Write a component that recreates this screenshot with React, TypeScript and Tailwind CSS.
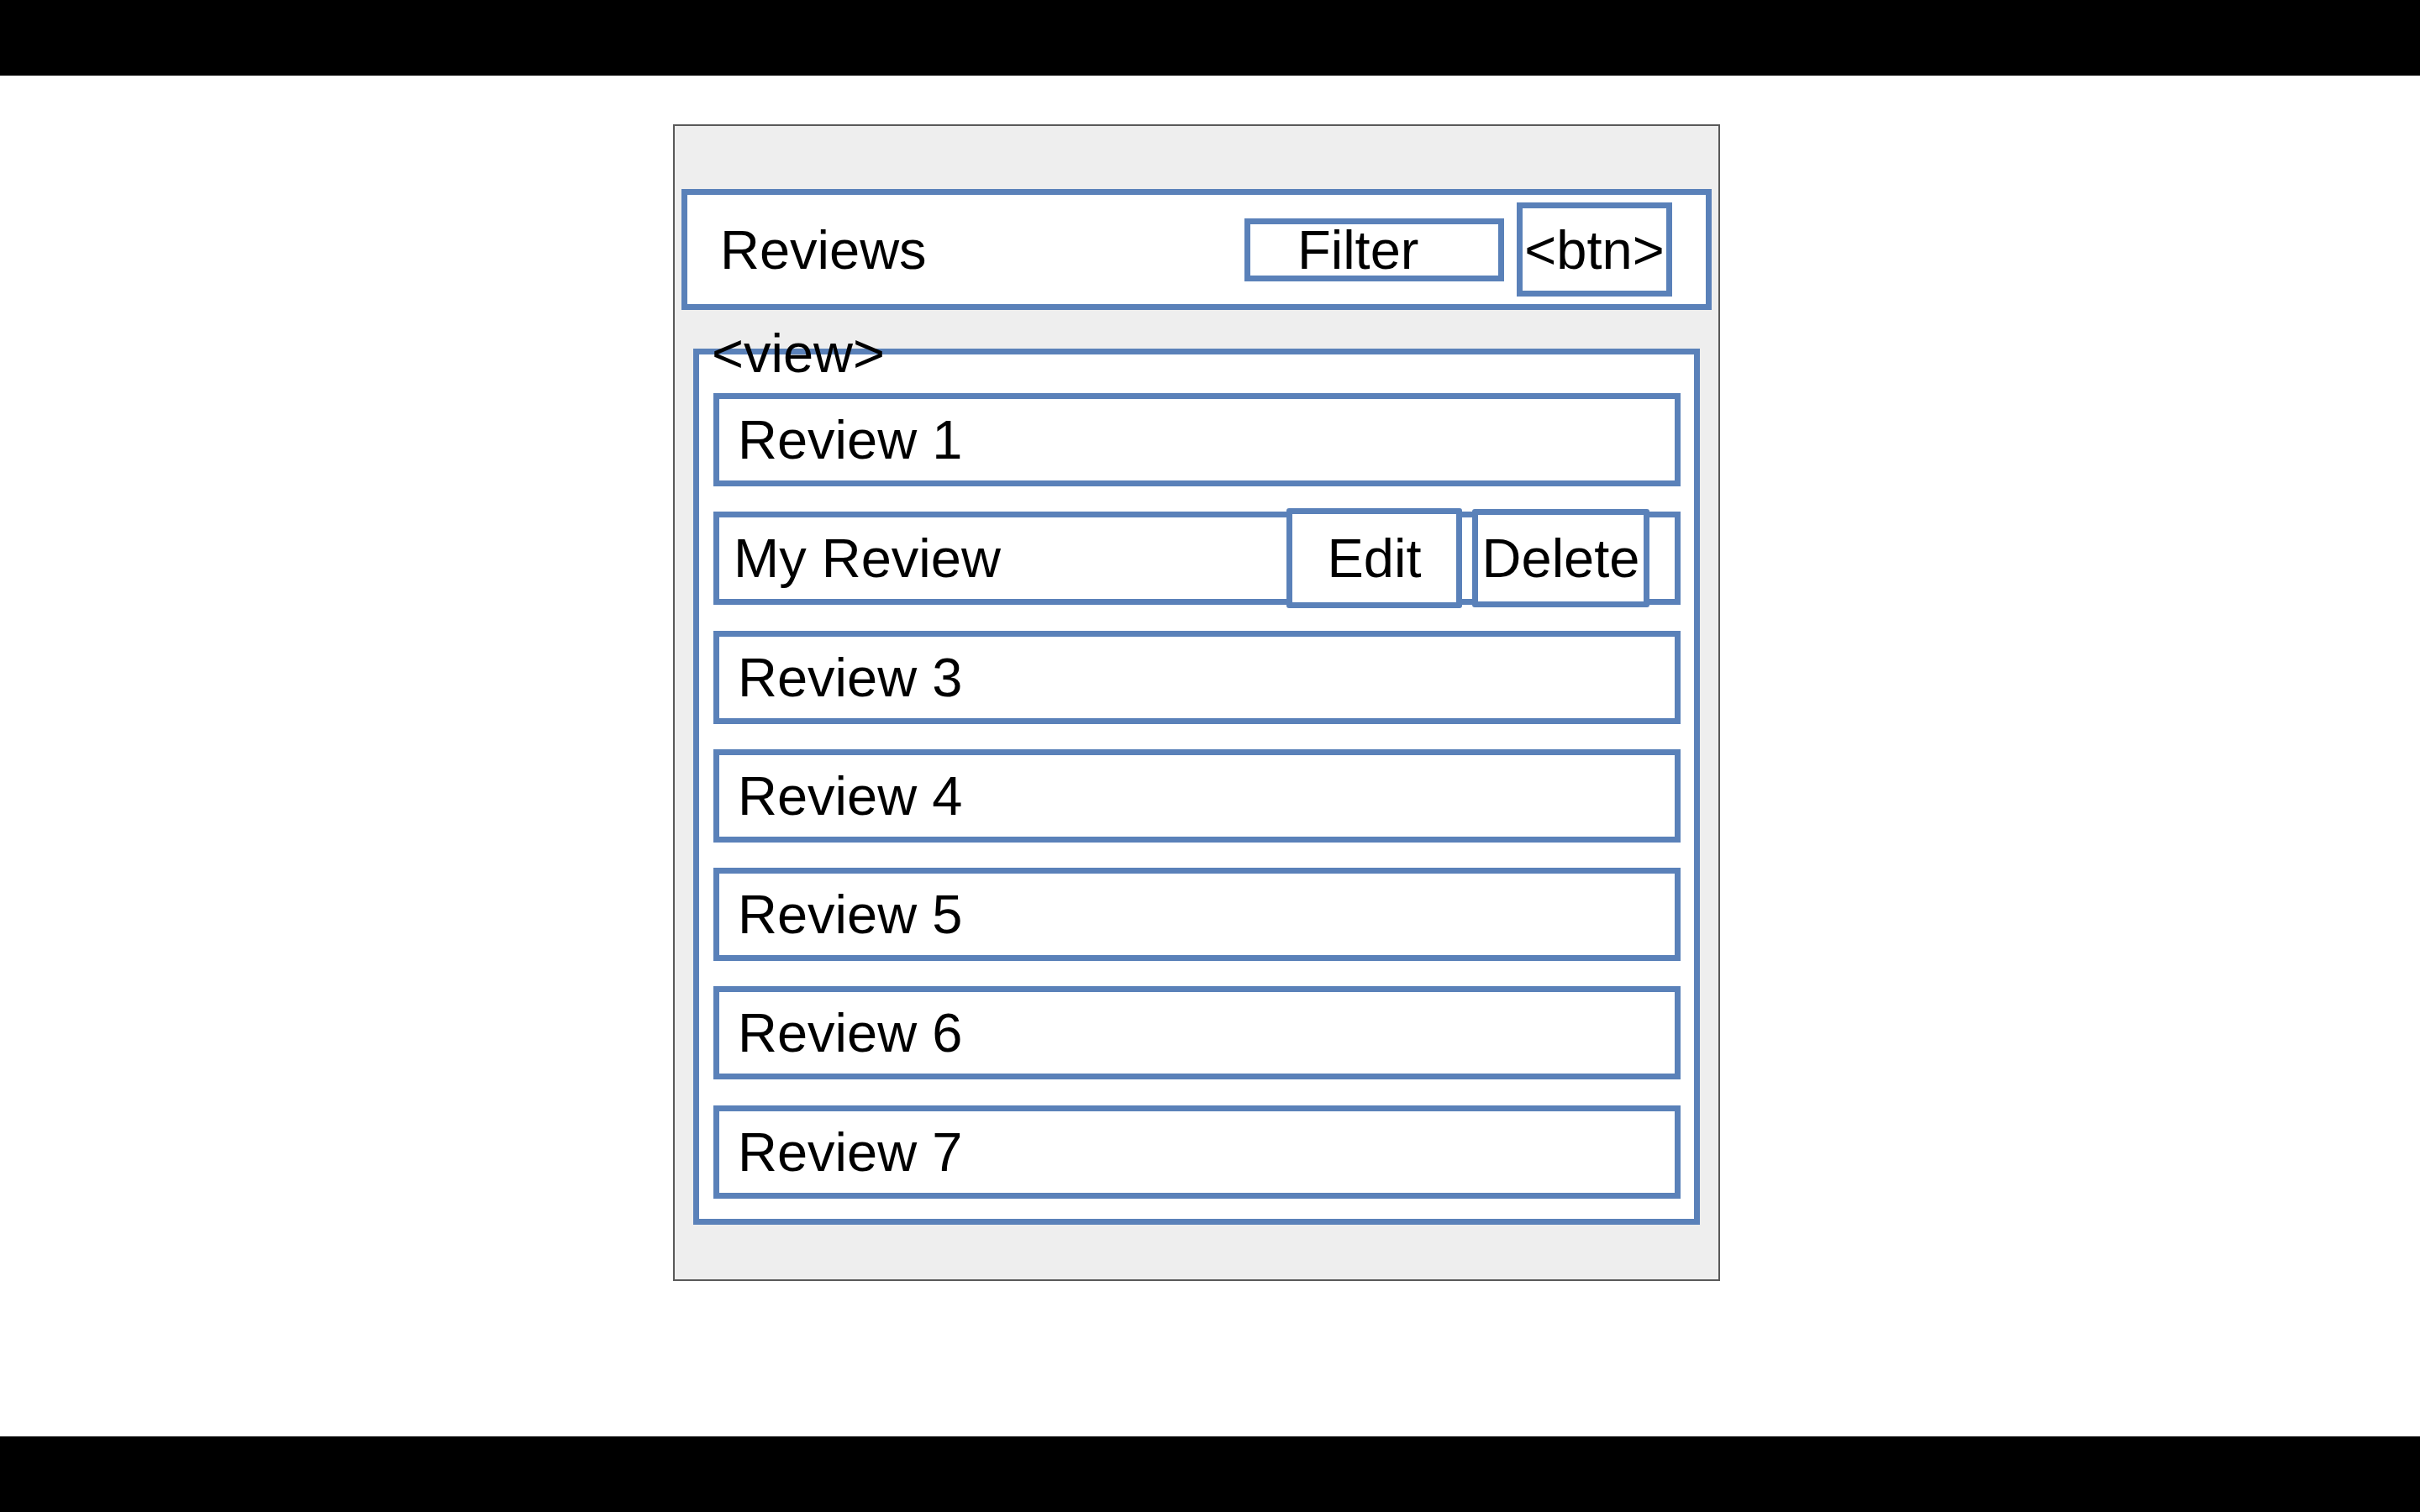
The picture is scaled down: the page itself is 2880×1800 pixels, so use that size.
import React from 'react';

const reviews = ['Review 1', 'My Review', 'Review 3', 'Review 4', 'Review 5', 'Review 6', 'Review 7'];

function ReviewRow({ label }: { label: string }) {
  if (label === 'My Review') {
    return (
      <div className="flex h-[111px] w-[1151px] items-center border-[7px] border-[#5a81b9] bg-white pl-[17px] pr-[30px]">
        <span className="flex-1 text-[65px] leading-none">{label}</span>
        <button className="flex h-[119px] w-[209px] items-center justify-center rounded-[3px] border-[7px] border-[#5a81b9] bg-white text-[65px] leading-none">
          Edit
        </button>
        <button className="ml-[12px] flex h-[117px] w-[211px] items-center justify-center rounded-[3px] border-[7px] border-[#5a81b9] bg-white text-[65px] leading-none">
          Delete
        </button>
      </div>
    );
  }
  return (
    <div className="flex h-[111px] w-[1151px] items-center border-[7px] border-[#5a81b9] bg-white pl-[22px]">
      <span className="text-[65px] leading-none">{label}</span>
    </div>
  );
}

export default function App() {
  return (
    <div className="flex h-screen flex-col bg-white text-black [font-family:'Liberation_Sans',Arial,sans-serif]">
      <div className="h-[90px] bg-black" />

      <div className="flex-1">
        <div className="ml-[801px] mt-[58px] flex h-[1377px] w-[1246px] flex-col border-2 border-[#595959] bg-[#eeeeee] px-[8px] pt-[75px]">
          {/* header */}
          <div className="flex h-[144px] items-center border-[7px] border-[#5a81b9] bg-white pl-[39px] pr-[40px]">
            <span className="flex-1 text-[65px] leading-none">Reviews</span>
            <button className="flex h-[75px] w-[309px] items-center border-[7px] border-[#5a81b9] bg-white pl-[56px] text-[65px] leading-none">
              Filter
            </button>
            <button className="ml-[15px] flex h-[112px] w-[185px] items-center justify-center border-[7px] border-[#5a81b9] bg-white text-[65px] leading-none">
              &lt;btn&gt;
            </button>
          </div>

          {/* list view */}
          <div className="relative mx-[14px] mt-[46px] flex h-[1043px] flex-col gap-[30.3px] border-[7px] border-[#5a81b9] bg-white pl-[17px] pt-[46px]">
            <span className="absolute left-[15px] top-[-34px] text-[65px] leading-none">&lt;view&gt;</span>
            {reviews.map((r) => (
              <ReviewRow key={r} label={r} />
            ))}
          </div>
        </div>
      </div>

      <div className="h-[90px] bg-black" />
    </div>
  );
}
